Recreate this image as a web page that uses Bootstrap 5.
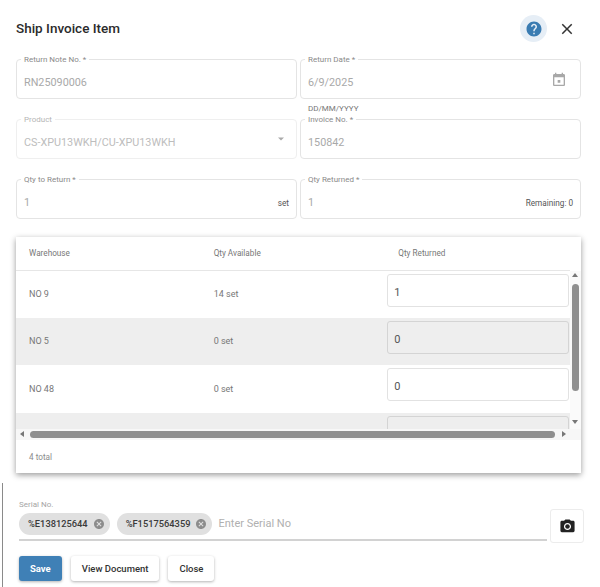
<!DOCTYPE html>
<html lang="en">
<head>
    <meta charset="UTF-8">
    <title>Ship Invoice Item</title>
    <link href="https://cdn.jsdelivr.net/npm/bootstrap@5.3.0/dist/css/bootstrap.min.css" rel="stylesheet">
    <style>
        body {
            background-color: #fff;
            font-family: Roboto, "Liberation Sans", sans-serif;
            color: #333;
            width: 600px;
            height: 587px;
            overflow: hidden;
        }

        .dlg-head { height: 59px; padding: 15px 19px 0 16px; }
        .dlg-title { font-size: 13.5px; line-height: 27px; font-weight: 500; color: #2b2b2b; margin: 0; }
        .help-btn { width: 27px; height: 27px; border-radius: 50%; background-color: #e6eef6; }
        .close-btn { width: 27px; height: 27px; margin-left: 6px; margin-right: 1px; }

        .form-area { display: grid; grid-template-columns: 281px 281px; column-gap: 3px; padding-left: 16px; }
        .form-cell { height: 60px; }
        .form-cell:nth-last-child(-n+2) { height: 42px; }
        .out-field { position: relative; height: 40px; border: 1px solid #e4e4e4; border-radius: 4px; padding: 0 7px; }
        .out-field.is-faint { border-color: #efefef; }
        .out-field label { position: absolute; top: -6px; left: 4px; padding: 0 3px; background: #fff; font-size: 8px; line-height: 11px; color: #8a8a8a; }
        .out-field.is-faint label { color: #b5b5b5; }
        .out-val { font-size: 10.8px; color: #a9a9a9; line-height: 16px; padding-top: 15px; }
        .is-faint .out-val { color: #bdbdbd; }
        .out-unit { font-size: 8.2px; color: #555; padding-top: 17px; }
        .hint-text { font-size: 8px; line-height: 11px; color: #777; padding: 4px 0 0 8px; }
        .cal-icon { margin: 12px 6px 0 0; }
        .caret-icon { margin-top: 11px; }

        .grid-card { width: 565px; margin: 16px 0 0 16px; background: #fff; box-shadow: 0 2px 6px rgba(0,0,0,.4); }
        .grid-scroll { position: relative; height: 192px; overflow: hidden; padding-right: 11px; }
        .wh-table { width: 554px; table-layout: fixed; margin: 0; font-size: 9px; color: #777; }
        .wh-table th { height: 33px; font-weight: 400; font-size: 8.2px; color: #777; padding: 0 0 0 13px; border-bottom: 1px solid #e6e6e6; vertical-align: middle; }
        .wh-table td { height: 47.5px; padding: 1px 0 0 13px; border: 0; vertical-align: middle; }
        .wh-table td.qty-cell { padding: 3px 1px 0 2px; vertical-align: top; }
        .wh-table tr.row-alt td { background-color: #eee; --bs-table-accent-bg: #eee; }
        .qty-input { display: block; width: 100%; height: 33px; border: 1px solid #e2e2e2; border-radius: 3px; padding: 4px 6px 0; font-size: 11px; line-height: 27px; color: #555; background: #fff; }
        .row-alt .qty-input { background: #eee; border-color: #d4d4d4; }

        .v-track { position: absolute; top: 34px; right: 0; bottom: 0; width: 11px; background: #fafafa; }
        .v-thumb { position: absolute; top: 13px; left: 2px; width: 7px; height: 107px; border-radius: 4px; background: #8f8f8f; }
        .arr { position: absolute; width: 0; height: 0; border: 3px solid transparent; }
        .arr-up { top: 2px; left: 2px; border-width: 0 3.5px 4px; border-bottom-color: #777; }
        .arr-down { bottom: 5px; left: 2px; border-width: 4px 3.5px 0; border-top-color: #777; }
        .h-track { position: relative; height: 11px; background: #f7f7f7; }
        .h-thumb { position: absolute; top: 2px; left: 14px; width: 525px; height: 7px; border-radius: 4px; background: #8f8f8f; }
        .arr-left { top: 2px; left: 4px; border-width: 3.5px 4px 3.5px 0; border-right-color: #777; }
        .arr-right { top: 2px; right: 15px; border-width: 3.5px 0 3.5px 4px; border-left-color: #777; }
        .grid-foot { height: 33px; padding: 2px 0 0 13px; font-size: 8.2px; color: #8c8c8c; }

        .serial-area { margin: 10px 0 0 2px; height: 104px; border-left: 1px solid #8a8a8a; padding: 17px 0 0 16px; }
        .serial-label { font-size: 8px; line-height: 10px; color: #a5a5a5; }
        .serial-line { width: 528px; height: 31px; padding-top: 3px; border-bottom: 2px solid #d2d2d2; }
        .chip-item { height: 22px; border-radius: 11px; background: #e0e0e0; padding: 0 5px 0 9px; margin-right: 7px; font-size: 9.3px; font-weight: 500; color: #3a3a3a; }
        .chip-item svg { margin-left: 5px; }
        .serial-hint { font-size: 11px; line-height: 22px; color: #b0b0b0; margin-left: -1px; }
        .cam-btn { width: 34px; height: 34px; margin: 9px 0 0 3px; border: 1px solid #ececec; border-radius: 3px; }

        .act-btn { height: 25px; padding: 0 11px; font-size: 9.5px; font-weight: 500; color: #333; background: #fff; border: 0; border-radius: 3px; box-shadow: 0 1px 3px rgba(0,0,0,.3); line-height: 25px; }
        .act-btn.is-main { background-color: #3f80b6; color: #fff; font-weight: 700; }
        .act-row { margin-top: 13px; gap: 9px; }
    </style>
</head>
<body>

<div class="dlg-head d-flex align-items-start">
    <h5 class="dlg-title flex-grow-1">Ship Invoice Item</h5>
    <div class="help-btn d-flex align-items-center justify-content-center">
        <svg width="18" height="18" viewBox="0 0 24 24" fill="#3a7cb2"><path d="M12 2C6.48 2 2 6.48 2 12s4.48 10 10 10 10-4.48 10-10S17.52 2 12 2zm1 17h-2v-2h2v2zm2.07-7.75l-.9.92C13.45 12.9 13 13.5 13 15h-2v-.5c0-1.1.45-2.1 1.17-2.83l1.24-1.26c.37-.36.59-.86.59-1.41 0-1.1-.9-2-2-2s-2 .9-2 2H8c0-2.21 1.79-4 4-4s4 1.79 4 4c0 .88-.36 1.68-.93 2.25z"/></svg>
    </div>
    <div class="close-btn d-flex align-items-center justify-content-center">
        <svg width="18" height="18" viewBox="0 0 24 24" fill="#333"><path d="M19 6.41 17.59 5 12 10.59 6.41 5 5 6.41 10.59 12 5 17.59 6.41 19 12 13.41 17.59 19 19 17.59 13.41 12z"/></svg>
    </div>
</div>

<div class="form-area">
    <div class="form-cell">
        <div class="out-field">
            <label>Return Note No. *</label>
            <div class="out-val">RN25090006</div>
        </div>
    </div>
    <div class="form-cell">
        <div class="out-field d-flex justify-content-between">
            <label>Return Date *</label>
            <div class="out-val">6/9/2025</div>
            <svg class="cal-icon" width="16" height="16" viewBox="0 0 24 24" fill="#a8a8a8"><path d="M19 3h-1V1h-2v2H8V1H6v2H5c-1.11 0-2 .9-2 2v14c0 1.1.89 2 2 2h14c1.1 0 2-.9 2-2V5c0-1.1-.9-2-2-2zm0 16H5V8h14v11zM10 12h4v4h-4z"/></svg>
        </div>
        <div class="hint-text">DD/MM/YYYY</div>
    </div>
    <div class="form-cell">
        <div class="out-field is-faint d-flex justify-content-between">
            <label>Product</label>
            <div class="out-val">CS-XPU13WKH/CU-XPU13WKH</div>
            <svg class="caret-icon" width="16" height="16" viewBox="0 0 16 16" fill="#aaa"><path d="M5 6.5h6L8 9.5z"/></svg>
        </div>
    </div>
    <div class="form-cell">
        <div class="out-field">
            <label>Invoice No. *</label>
            <div class="out-val">150842</div>
        </div>
    </div>
    <div class="form-cell">
        <div class="out-field d-flex justify-content-between">
            <label>Qty to Return *</label>
            <div class="out-val">1</div>
            <div class="out-unit">set</div>
        </div>
    </div>
    <div class="form-cell">
        <div class="out-field d-flex justify-content-between">
            <label>Qty Returned *</label>
            <div class="out-val">1</div>
            <div class="out-unit">Remaining: 0</div>
        </div>
    </div>
</div>

<div class="grid-card">
    <div class="grid-scroll">
        <table class="table wh-table">
            <thead>
                <tr><th>Warehouse</th><th>Qty Available</th><th>Qty Returned</th></tr>
            </thead>
            <tbody>
                <tr><td>NO 9</td><td>14 set</td><td class="qty-cell"><div class="qty-input">1</div></td></tr>
                <tr class="row-alt"><td>NO 5</td><td>0 set</td><td class="qty-cell"><div class="qty-input">0</div></td></tr>
                <tr><td>NO 48</td><td>0 set</td><td class="qty-cell"><div class="qty-input">0</div></td></tr>
                <tr class="row-alt"><td></td><td></td><td class="qty-cell"><div class="qty-input"></div></td></tr>
            </tbody>
        </table>
        <div class="v-track">
            <span class="arr arr-up"></span>
            <div class="v-thumb"></div>
            <span class="arr arr-down"></span>
        </div>
    </div>
    <div class="h-track">
        <span class="arr arr-left"></span>
        <div class="h-thumb"></div>
        <span class="arr arr-right"></span>
    </div>
    <div class="grid-foot d-flex align-items-center">4 total</div>
</div>

<div class="serial-area">
    <div class="d-flex">
        <div>
            <div class="serial-label">Serial No.</div>
            <div class="serial-line d-flex align-items-start">
                <span class="chip-item d-inline-flex align-items-center">%E138125644
                    <svg width="12" height="12" viewBox="0 0 24 24" fill="#8c8c8c"><path d="M12 2C6.47 2 2 6.47 2 12s4.47 10 10 10 10-4.47 10-10S17.53 2 12 2zm5 13.59L15.59 17 12 13.41 8.41 17 7 15.59 10.59 12 7 8.41 8.41 7 12 10.59 15.59 7 17 8.41 13.41 12 17 15.59z"/></svg>
                </span>
                <span class="chip-item d-inline-flex align-items-center">%F1517564359
                    <svg width="12" height="12" viewBox="0 0 24 24" fill="#8c8c8c"><path d="M12 2C6.47 2 2 6.47 2 12s4.47 10 10 10 10-4.47 10-10S17.53 2 12 2zm5 13.59L15.59 17 12 13.41 8.41 17 7 15.59 10.59 12 7 8.41 8.41 7 12 10.59 15.59 7 17 8.41 13.41 12 17 15.59z"/></svg>
                </span>
                <span class="serial-hint">Enter Serial No</span>
            </div>
        </div>
        <div class="cam-btn d-flex align-items-center justify-content-center">
            <svg width="17" height="17" viewBox="0 0 24 24" fill="#222"><circle cx="12" cy="12" r="3.2"/><path d="M9 2 7.17 4H4c-1.1 0-2 .9-2 2v12c0 1.1.9 2 2 2h16c1.1 0 2-.9 2-2V6c0-1.1-.9-2-2-2h-3.17L15 2H9zm3 15c-2.76 0-5-2.24-5-5s2.24-5 5-5 5 2.24 5 5-2.24 5-5 5z"/></svg>
        </div>
    </div>
    <div class="act-row d-flex">
        <button class="btn act-btn is-main">Save</button>
        <button class="btn act-btn">View Document</button>
        <button class="btn act-btn">Close</button>
    </div>
</div>

<script src="https://cdn.jsdelivr.net/npm/bootstrap@5.3.0/dist/js/bootstrap.bundle.min.js"></script>
</body>
</html>
